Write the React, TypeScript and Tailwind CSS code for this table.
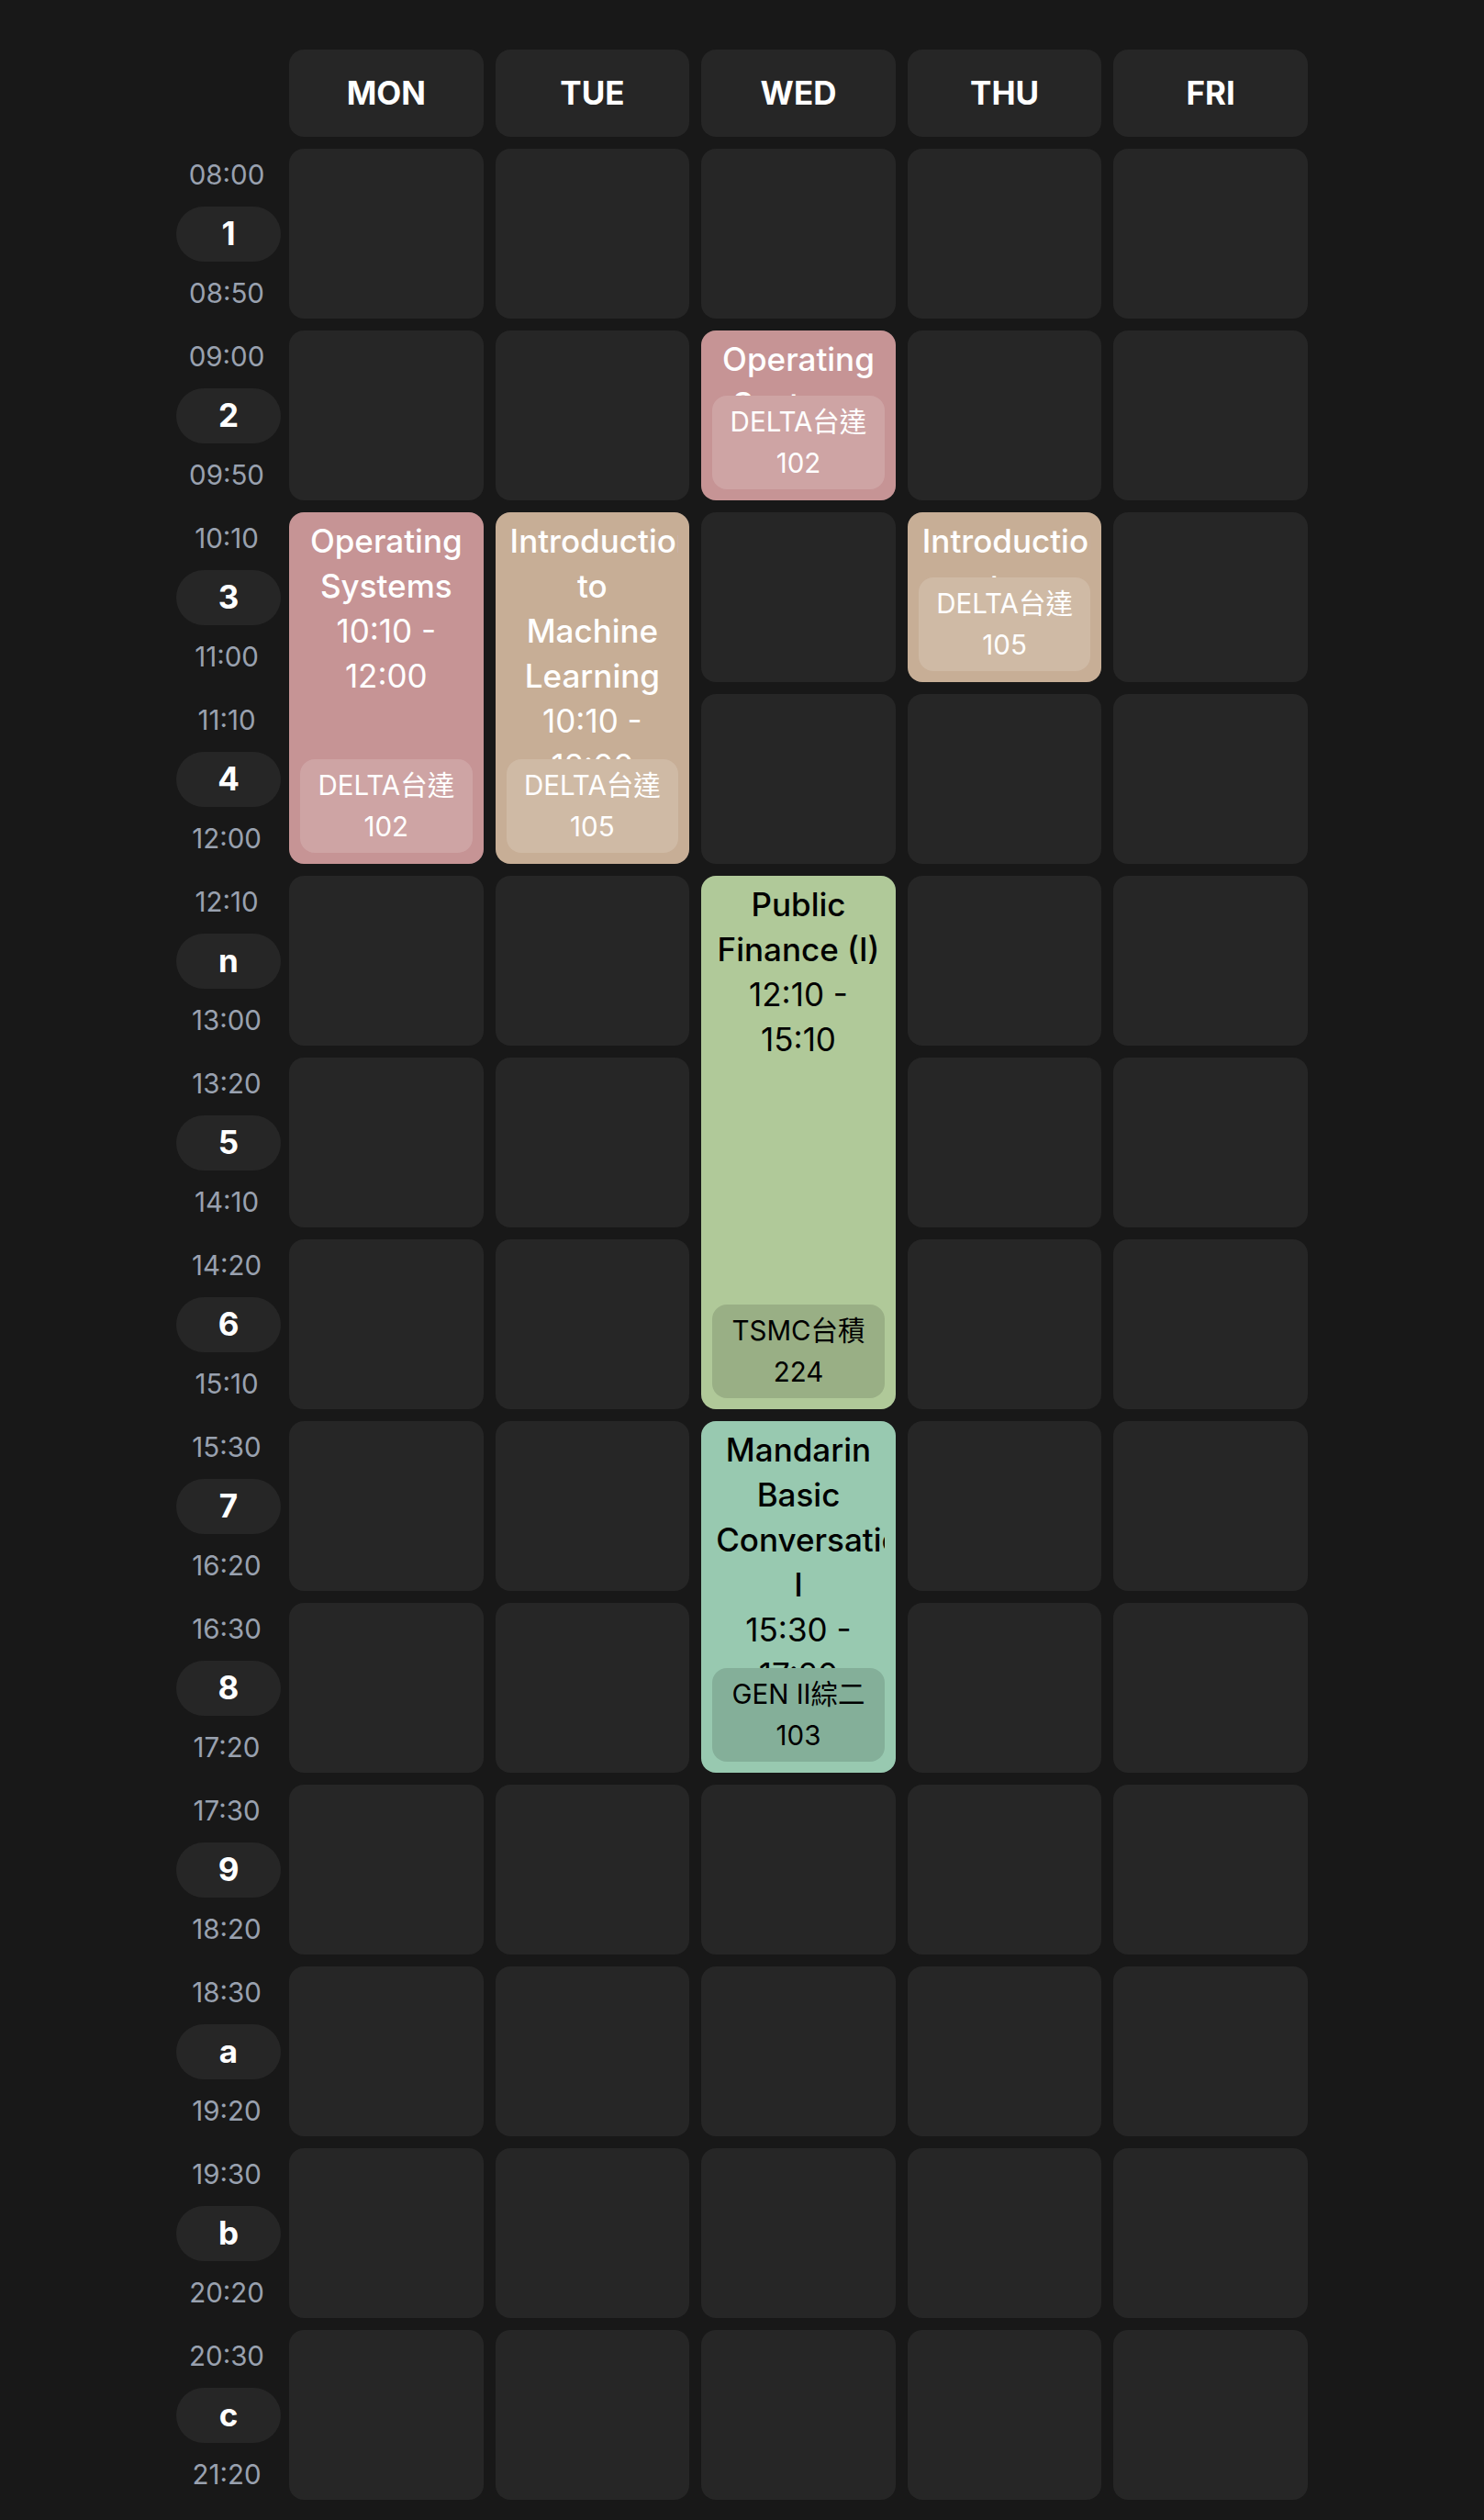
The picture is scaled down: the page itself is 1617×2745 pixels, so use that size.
import React from 'react';

type Tone = 'pink' | 'tan' | 'green' | 'teal';

interface Period {
  label: string;
  start: string;
  end: string;
}

interface CourseBlock {
  day: number;
  row: number;
  span: 1 | 2 | 3;
  title: string;
  time: string;
  room: string;
  code: string;
  tone: Tone;
}

const DAYS = ['MON', 'TUE', 'WED', 'THU', 'FRI'];

const PERIODS: Period[] = [
  { label: '1', start: '08:00', end: '08:50' },
  { label: '2', start: '09:00', end: '09:50' },
  { label: '3', start: '10:10', end: '11:00' },
  { label: '4', start: '11:10', end: '12:00' },
  { label: 'n', start: '12:10', end: '13:00' },
  { label: '5', start: '13:20', end: '14:10' },
  { label: '6', start: '14:20', end: '15:10' },
  { label: '7', start: '15:30', end: '16:20' },
  { label: '8', start: '16:30', end: '17:20' },
  { label: '9', start: '17:30', end: '18:20' },
  { label: 'a', start: '18:30', end: '19:20' },
  { label: 'b', start: '19:30', end: '20:20' },
  { label: 'c', start: '20:30', end: '21:20' },
];

const COURSES: CourseBlock[] = [
  { day: 2, row: 1, span: 1, title: 'Operating Systems', time: '09:00 - 09:50', room: 'DELTA台達', code: '102', tone: 'pink' },
  { day: 0, row: 2, span: 2, title: 'Operating Systems', time: '10:10 - 12:00', room: 'DELTA台達', code: '102', tone: 'pink' },
  { day: 1, row: 2, span: 2, title: 'Introduction to Machine Learning', time: '10:10 - 12:00', room: 'DELTA台達', code: '105', tone: 'tan' },
  { day: 3, row: 2, span: 1, title: 'Introduction to Machine Learning', time: '10:10 - 11:00', room: 'DELTA台達', code: '105', tone: 'tan' },
  { day: 2, row: 4, span: 3, title: 'Public Finance (I)', time: '12:10 - 15:10', room: 'TSMC台積', code: '224', tone: 'green' },
  { day: 2, row: 7, span: 2, title: 'Mandarin Basic Conversation I', time: '15:30 - 17:20', room: 'GEN II綜二', code: '103', tone: 'teal' },
];

// grid line lookups, written out so tailwind picks them up
const COL_START = ['col-start-2', 'col-start-3', 'col-start-4', 'col-start-5', 'col-start-6'];
const ROW_START = [
  'row-start-2', 'row-start-3', 'row-start-4', 'row-start-5', 'row-start-6',
  'row-start-7', 'row-start-8', 'row-start-9', 'row-start-10', 'row-start-11',
  'row-start-12', 'row-start-13', 'row-start-14',
];
const ROW_SPAN: Record<number, string> = { 1: 'row-span-1', 2: 'row-span-2', 3: 'row-span-3' };

const TONES: Record<Tone, { card: string; room: string }> = {
  pink: { card: 'bg-[#c69495] text-white', room: 'bg-white/15' },
  tan: { card: 'bg-[#c7ae96] text-white', room: 'bg-white/15' },
  green: { card: 'bg-[#b0c999] text-black', room: 'bg-black/[0.13]' },
  teal: { card: 'bg-[#98c9b0] text-black', room: 'bg-black/[0.13]' },
};

const PeriodLabel: React.FC<{ period: Period; row: number }> = ({ period, row }) => (
  <div className={`col-start-1 ${ROW_START[row]} flex flex-col items-center justify-between py-[7px]`}>
    <span className="text-[29.5px] leading-[42px] text-gray-400">{period.start}</span>
    <div className="self-start w-[114px] h-[60px] rounded-full bg-[#262626] flex items-center justify-center text-[35px] font-bold text-white">
      {period.label}
    </div>
    <span className="text-[29.5px] leading-[42px] text-gray-400">{period.end}</span>
  </div>
);

const CourseCard: React.FC<{ course: CourseBlock }> = ({ course }) => {
  const tone = TONES[course.tone];
  return (
    <div
      className={`${COL_START[course.day]} ${ROW_START[course.row]} ${ROW_SPAN[course.span]} ${tone.card} rounded-[16px] px-[12px] pt-[7px] pb-[12px] flex flex-col min-h-0 overflow-hidden`}
    >
      <div className="flex-1 min-h-0 overflow-hidden text-center text-[35px] leading-[49px]">
        <div className="font-medium px-[4px]">{course.title}</div>
        <div>{course.time}</div>
      </div>
      <div className={`${tone.room} rounded-[16px] py-[5.5px] text-center text-[29.5px] leading-[45.5px]`}>
        <div>{course.room}</div>
        <div>{course.code}</div>
      </div>
    </div>
  );
};

export default function App() {
  return (
    <div className="min-h-screen bg-[#181818] pt-[54px] pb-[22px] font-['Inter','Noto_Sans_CJK_TC',sans-serif]">
      <div className="mx-auto w-[1233px] grid grid-cols-[110px_repeat(5,minmax(0,1fr))] grid-rows-[95px_repeat(13,185px)] gap-[13px]">
        <div className="col-start-1 row-start-1" />
        {DAYS.map((day, i) => (
          <div
            key={day}
            className={`${COL_START[i]} row-start-1 rounded-[16px] bg-[#262626] flex items-center justify-center text-[35px] font-bold text-white`}
          >
            {day}
          </div>
        ))}

        {PERIODS.map((period, r) => (
          <React.Fragment key={period.label}>
            <PeriodLabel period={period} row={r} />
            {DAYS.map((day, c) => (
              <div key={day} className={`${COL_START[c]} ${ROW_START[r]} rounded-[16px] bg-[#262626]`} />
            ))}
          </React.Fragment>
        ))}

        {COURSES.map((course) => (
          <CourseCard key={`${course.day}-${course.row}`} course={course} />
        ))}
      </div>
    </div>
  );
}
